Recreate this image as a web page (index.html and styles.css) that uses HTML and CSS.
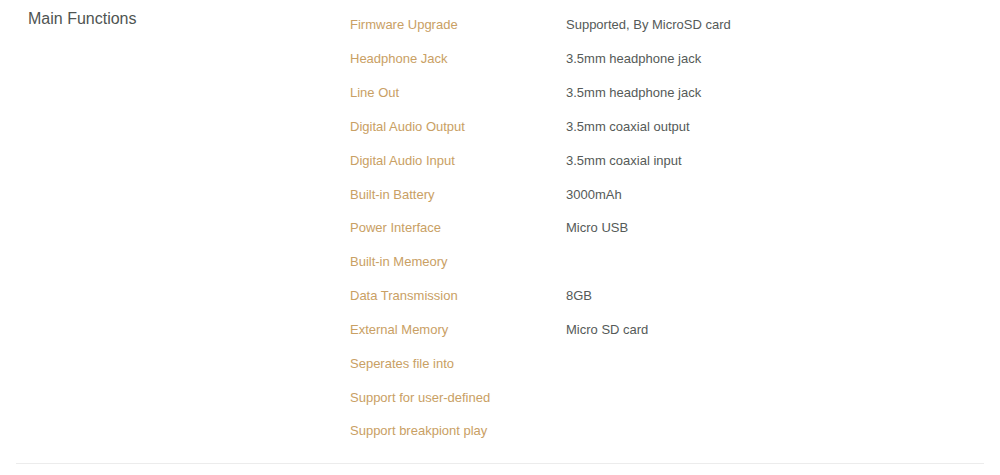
FILE: index.html
```html
<!DOCTYPE html>
<html>
<head>
<meta charset="utf-8">
<link rel="stylesheet" href="styles.css">
</head>
<body>
<div class="section">
  <div class="title">Main Functions</div>
  <div class="specs">
    <div class="row"><span class="label">Firmware Upgrade</span><span class="value">Supported, By MicroSD card</span></div>
    <div class="row"><span class="label">Headphone Jack</span><span class="value">3.5mm headphone jack</span></div>
    <div class="row"><span class="label">Line Out</span><span class="value">3.5mm headphone jack</span></div>
    <div class="row"><span class="label">Digital Audio Output</span><span class="value">3.5mm coaxial output</span></div>
    <div class="row"><span class="label">Digital Audio Input</span><span class="value">3.5mm coaxial input</span></div>
    <div class="row"><span class="label">Built-in Battery</span><span class="value">3000mAh</span></div>
    <div class="row"><span class="label">Power Interface</span><span class="value">Micro USB</span></div>
    <div class="row"><span class="label">Built-in Memeory</span><span class="value"></span></div>
    <div class="row"><span class="label">Data Transmission</span><span class="value">8GB</span></div>
    <div class="row"><span class="label">External Memory</span><span class="value">Micro SD card</span></div>
    <div class="row"><span class="label">Seperates file into</span><span class="value"></span></div>
    <div class="row"><span class="label">Support for user-defined</span><span class="value"></span></div>
    <div class="row"><span class="label">Support breakpiont play</span><span class="value"></span></div>
  </div>
</div>
</body>
</html>
```

FILE: styles.css
```css
html, body {
  margin: 0;
  padding: 0;
  background: #fff;
}
body {
  font-family: "Liberation Sans", Arial, sans-serif;
}
.section {
  margin: 0 16px;
  padding: 8px 0 15px 12px;
  display: flex;
  align-items: flex-start;
  border-bottom: 1px solid #ececec;
}
.title {
  width: 322px;
  flex: none;
  font-size: 16px;
  line-height: 22px;
  color: #4f5452;
}
.specs {
  display: flex;
  flex-direction: column;
}
.row {
  display: flex;
  height: 33.83px;
  align-items: center;
  font-size: 13px;
}
.label {
  width: 216px;
  color: #c9a064;
}
.value {
  color: #555a58;
}
```
